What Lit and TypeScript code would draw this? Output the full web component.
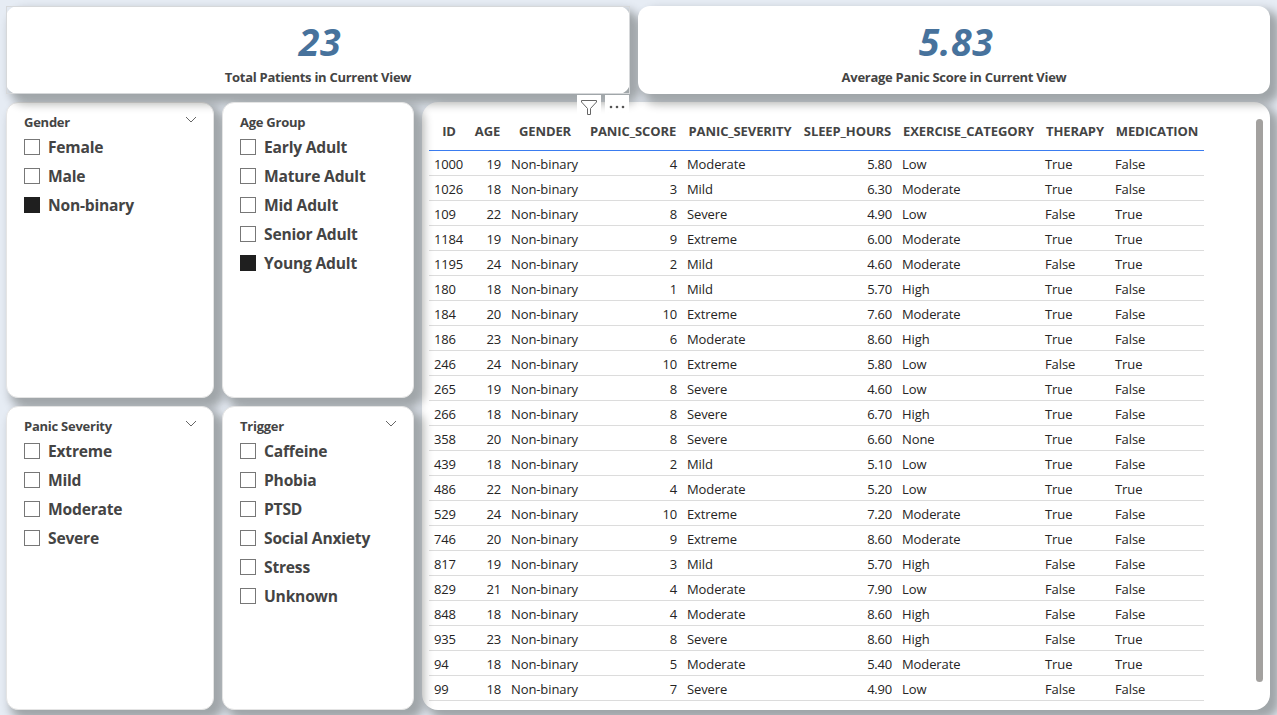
import { LitElement, html, css } from "lit";
import { customElement, property } from "lit/decorators.js";
import { classMap } from "lit/directives/class-map.js";

@customElement("kpi-card")
class KpiCard extends LitElement {
  @property() value = "";
  @property() label = "";
  static styles = css`
    :host { display: flex; flex-direction: column; align-items: center; box-sizing: border-box; }
    .value { margin-top: 14px; padding-left: 4px; font: italic 700 37.5px/44px "Open Sans", sans-serif; letter-spacing: 0.5px; color: #47729c; }
    .label { margin-top: 3px; font: 700 13px/20px "Open Sans", sans-serif; letter-spacing: -0.28px; color: #444; }
  `;
  render() {
    return html`<div class="value">${this.value}</div><div class="label">${this.label}</div>`;
  }
}

@customElement("slicer-card")
class SlicerCard extends LitElement {
  @property() heading = "";
  @property({ type: Array }) items: string[] = [];
  @property() selected = "";
  @property({ type: Boolean }) chevron = false;
  static styles = css`
    :host { display: block; box-sizing: border-box; padding: 9px 16px 0 17px; color: #444; font-family: "Open Sans", sans-serif; }
    .head { display: flex; justify-content: space-between; height: 20px; font-weight: 700; font-size: 13px; line-height: 20px; letter-spacing: -0.25px; }
    .chev { margin-top: 4px; }
    .item { display: flex; gap: 8px; height: 29px; }
    .box { box-sizing: border-box; width: 16px; height: 16px; margin-top: 6.5px; border: 1px solid #777; background: #fff; }
    .box.on { background: #1f1f1f; border-color: #1f1f1f; }
    .text { font-weight: 700; font-size: 15.6px; line-height: 31px; letter-spacing: -0.2px; white-space: nowrap; }
  `;
  render() {
    return html`<div class="head"><span>${this.heading}</span>${this.chevron
        ? html`<svg class="chev" width="12" height="8" viewBox="0 0 12 8"><path d="M1 1 L6 6 L11 1" fill="none" stroke="#666" /></svg>`
        : ""}</div>
      <div class="list">${this.items.map((t) => html`<div class="item">
        <span class=${classMap({ box: true, on: t === this.selected })}></span><span class="text">${t}</span></div>`)}</div>`;
  }
}

const HEADERS = ["ID", "AGE", "GENDER", "PANIC_SCORE", "PANIC_SEVERITY", "SLEEP_HOURS", "EXERCISE_CATEGORY", "THERAPY", "MEDICATION"];
const ROWS = `1000 19 4 Moderate 5.80 Low True False
1026 18 3 Mild 6.30 Moderate True False
109 22 8 Severe 4.90 Low False True
1184 19 9 Extreme 6.00 Moderate True True
1195 24 2 Mild 4.60 Moderate False True
180 18 1 Mild 5.70 High True False
184 20 10 Extreme 7.60 Moderate True False
186 23 6 Moderate 8.60 High True False
246 24 10 Extreme 5.80 Low False True
265 19 8 Severe 4.60 Low True False
266 18 8 Severe 6.70 High True False
358 20 8 Severe 6.60 None True False
439 18 2 Mild 5.10 Low True False
486 22 4 Moderate 5.20 Low True True
529 24 10 Extreme 7.20 Moderate True False
746 20 9 Extreme 8.60 Moderate True False
817 19 3 Mild 5.70 High False False
829 21 4 Moderate 7.90 Low False False
848 18 4 Moderate 8.60 High False False
935 23 8 Severe 8.60 High False True
94 18 5 Moderate 5.40 Moderate True True
99 18 7 Severe 4.90 Low False False`.split("\n").map((line) => {
  const c = line.split(" ");
  return [c[0], c[1], "Non-binary", ...c.slice(2)];
});

@customElement("patient-table")
class PatientTable extends LitElement {
  static styles = css`
    :host { display: flex; justify-content: space-between; box-sizing: border-box; padding: 11px 7px 0 7px; font-family: "Open Sans", sans-serif; }
    .row { display: grid; grid-template-columns: 40px 37px 78px 98px 116px 99px 143px 70px 94px; box-sizing: border-box; height: 25px; border-bottom: 1px solid #dcdcdc; font-size: 13px; line-height: 26px; color: #252423; }
    .row span { padding: 0 5px; white-space: nowrap; }
    .row .num { text-align: right; letter-spacing: -0.22px; }
    .row .id { letter-spacing: -0.22px; }
    .row .txt { letter-spacing: -0.1px; }
    .row.head { height: 38px; border-bottom-color: #3a7cf0; font-weight: 700; color: #444; line-height: 36px; }
    .head span { display: flex; justify-content: center; letter-spacing: -0.1px; }
    .bar { width: 7px; height: 563px; margin: 6px 0 0; border-radius: 4px; background: #a3a19f; }
  `;
  render() {
    return html`<div>
        <div class="row head">${HEADERS.map((h) => html`<span>${h}</span>`)}</div>
        ${ROWS.map((r) => html`<div class="row">${r.map((c, i) => html`<span
          class=${classMap({ num: i === 1 || i === 3 || i === 5, id: i === 0, txt: [2, 4, 6, 7, 8].includes(i) })}>${c}</span>`)}</div>`)}
      </div><div class="bar"></div>`;
  }
}

@customElement("app-root")
class AppRoot extends LitElement {
  static styles = css`
    :host { display: flex; flex-direction: column; gap: 8px; box-sizing: border-box; width: 1277px; height: 715px; padding: 6px 7px 5px 6px; overflow: hidden; background: #e6ecf4; }
    .top { display: grid; grid-template-columns: 624px 632px; gap: 8px; height: 88px; }
    .main { display: grid; grid-template-columns: 208px 192px 848px; grid-template-rows: 296px 304px; gap: 8px; }
    .card { position: relative; border-radius: 12px; background: #fff; box-shadow: 7px 7px 10px 3px rgba(8, 10, 0, 0.31); }
    .slicer { border: 1px solid #e4e4e4; }
    .table { grid-column: 3; grid-row: 1 / 3; z-index: 0; border-radius: 16px; }
    .gender { z-index: 1; }
    .total { z-index: 2; }
    .frame { position: absolute; inset: 0; border: 1px solid #d6d8da; z-index: 3; }
    .average { z-index: 2; }
    .age, .severity, .trigger { z-index: 3; }
    .slot { position: relative; display: grid; z-index: 2; }
    .tools { position: absolute; z-index: 4; left: 577px; top: 95px; display: flex; gap: 4px; }
    .tool { display: grid; place-items: center; width: 24px; height: 24px; background: linear-gradient(#fff 70%, rgba(255, 255, 255, 0)); }
  `;
  render() {
    return html`
      <div class="top">
        <div class="slot"><kpi-card class="card total" value="23" label="Total Patients in Current View"></kpi-card><div class="frame"></div></div>
        <kpi-card class="card average" value="5.83" label="Average Panic Score in Current View"></kpi-card>
      </div>
      <div class="main">
        <slicer-card class="card slicer gender" heading="Gender" chevron selected="Non-binary" .items=${["Female", "Male", "Non-binary"]}></slicer-card>
        <slicer-card class="card slicer age" heading="Age Group" selected="Young Adult" .items=${["Early Adult", "Mature Adult", "Mid Adult", "Senior Adult", "Young Adult"]}></slicer-card>
        <patient-table class="card table"></patient-table>
        <slicer-card class="card slicer severity" heading="Panic Severity" chevron .items=${["Extreme", "Mild", "Moderate", "Severe"]}></slicer-card>
        <slicer-card class="card slicer trigger" heading="Trigger" chevron .items=${["Caffeine", "Phobia", "PTSD", "Social Anxiety", "Stress", "Unknown"]}></slicer-card>
      </div>
      <div class="tools">
        <div class="tool"><svg width="24" height="24" viewBox="0 0 24 24"><path d="M4.5 5.5 H19.5 V7 L13.5 13.5 V19.5 H10.5 V13.5 L4.5 7 Z" fill="none" stroke="#666" /></svg></div>
        <div class="tool"><svg width="24" height="24" viewBox="0 0 24 24" fill="#555"><circle cx="6" cy="12" r="1.3" /><circle cx="12" cy="12" r="1.3" /><circle cx="18" cy="12" r="1.3" /></svg></div>
      </div>`;
  }
}
